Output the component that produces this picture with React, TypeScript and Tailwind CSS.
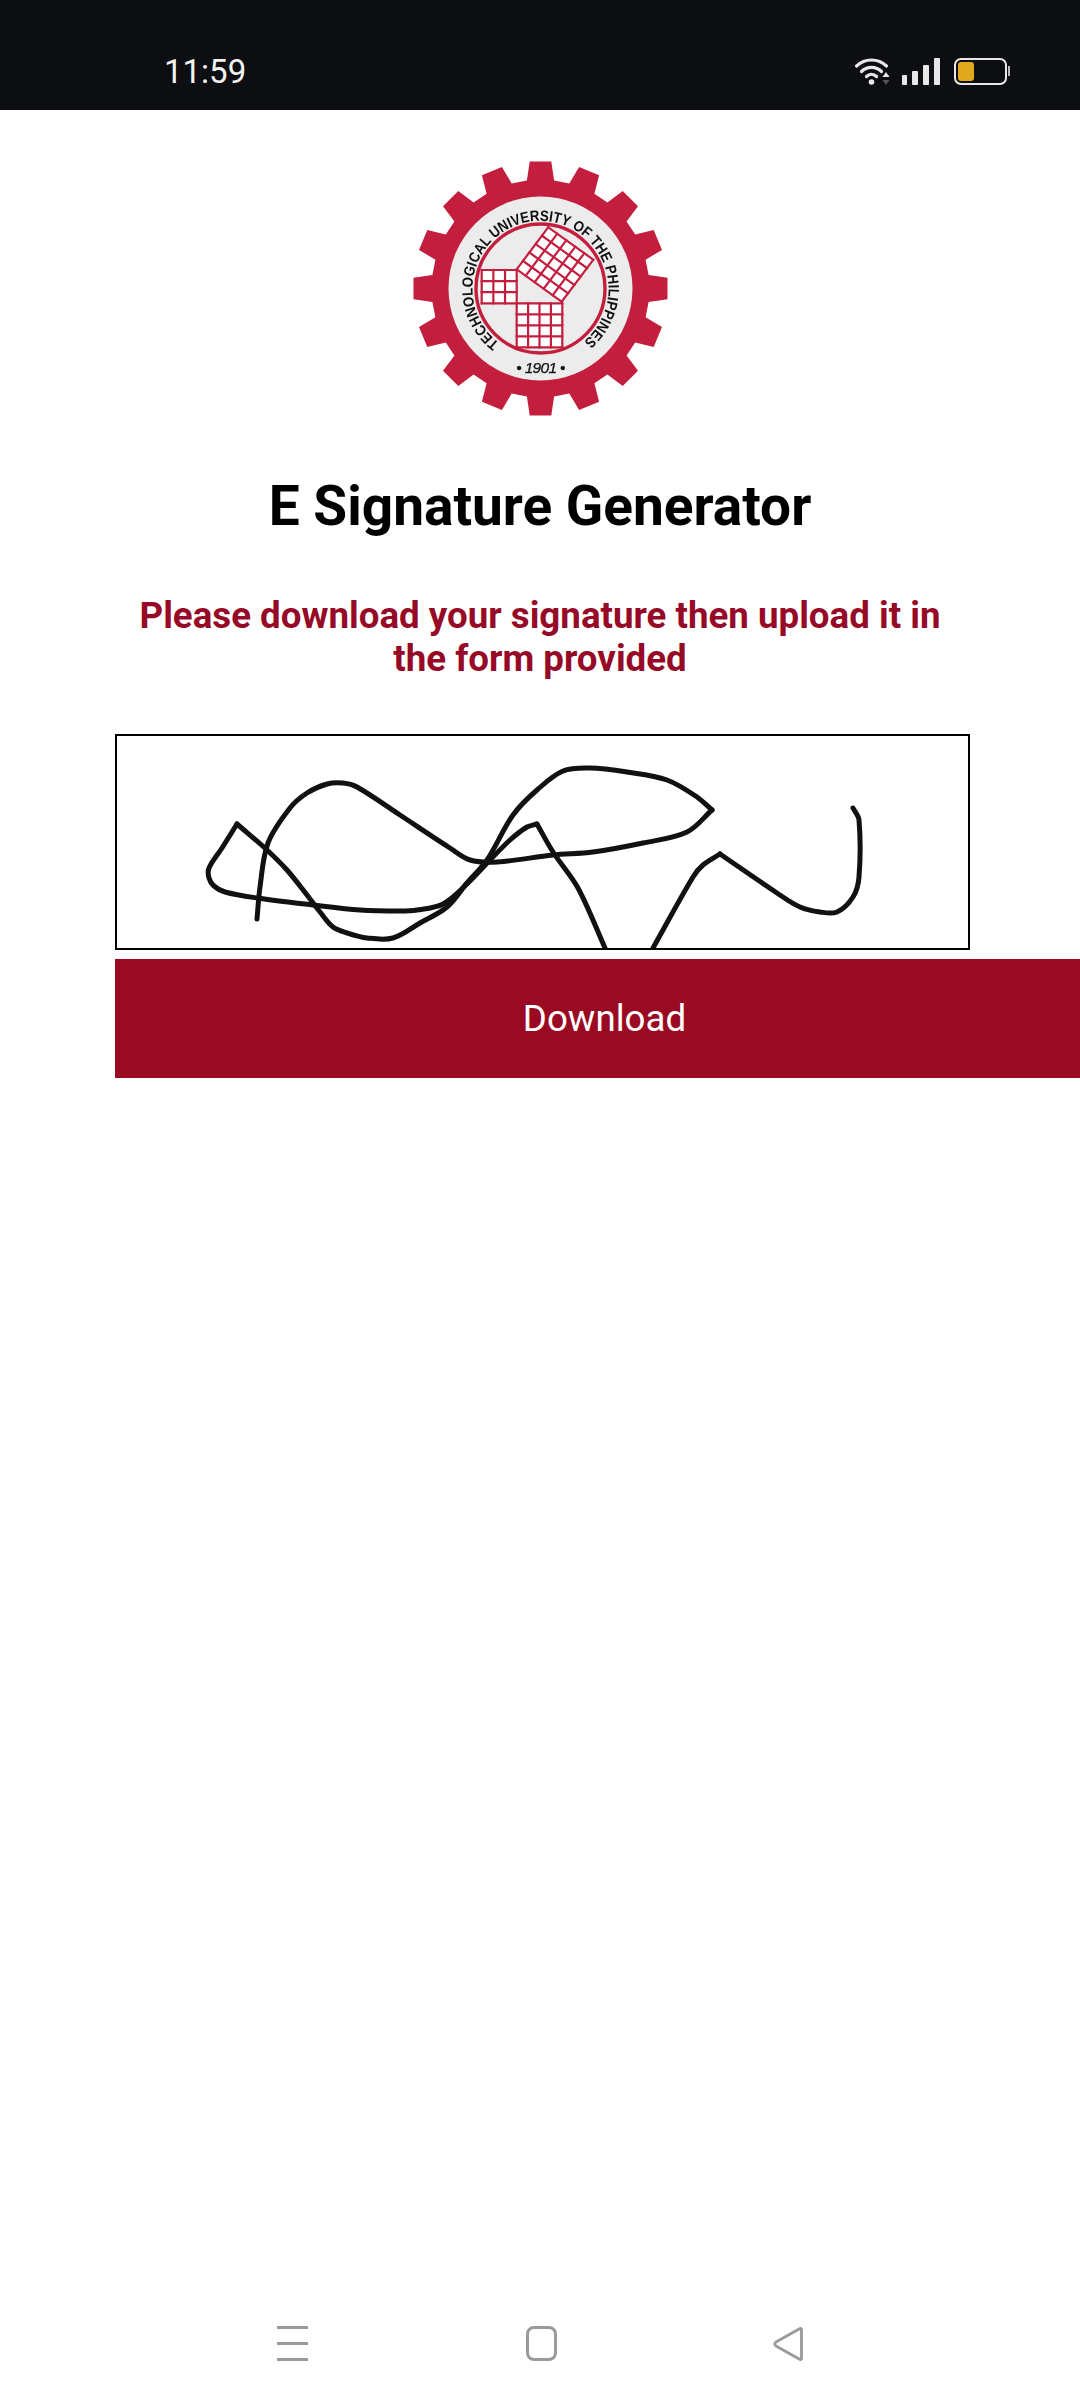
import React from "react";

const roboto = "font-['Roboto',sans-serif]";

// smooth line through the points, handles scaled to the segment length
const smooth = (pts: number[][]) => {
  const tangent = (a: number[], b: number[]) => {
    const dx = b[0] - a[0];
    const dy = b[1] - a[1];
    const l = Math.hypot(dx, dy) || 1;
    return [dx / l, dy / l];
  };
  let d = `M${pts[0][0]} ${pts[0][1]}`;
  for (let i = 0; i < pts.length - 1; i++) {
    const p0 = pts[i - 1] || pts[i];
    const p1 = pts[i];
    const p2 = pts[i + 1];
    const p3 = pts[i + 2] || p2;
    const len = Math.hypot(p2[0] - p1[0], p2[1] - p1[1]) / 3;
    const t1 = tangent(p0, p2);
    const t2 = tangent(p1, p3);
    d += ` C${(p1[0] + t1[0] * len).toFixed(1)} ${(p1[1] + t1[1] * len).toFixed(1)} ${(p2[0] - t2[0] * len).toFixed(1)} ${(p2[1] - t2[1] * len).toFixed(1)} ${p2[0]} ${p2[1]}`;
  }
  return d;
};

const strokes: number[][][] = [
  [[257, 919], [260, 887], [268, 843], [290, 808], [307, 793], [327, 784], [343, 783], [357, 787], [400, 815], [450, 848], [470, 860], [497, 862], [553, 855], [593, 852], [643, 843], [687, 832], [712, 810]],
  [[712, 810], [697, 797], [667, 780], [627, 772], [590, 768], [563, 771], [537, 790], [513, 815], [487, 860], [467, 883], [447, 907], [420, 923], [393, 938], [367, 938], [347, 933], [333, 927], [320, 912], [307, 895], [287, 870], [267, 850], [237, 824]],
  [[237, 824], [222, 848], [209, 868], [209, 878], [214, 886], [225, 892], [257, 898], [313, 905], [360, 910], [400, 911], [417, 910], [443, 904], [467, 884], [490, 860], [510, 840], [527, 827], [537, 824]],
  [[537, 824], [553, 852], [578, 888], [605, 948]],
  [[653, 948], [693, 877], [703, 865], [720, 854]],
  [[720, 854], [777, 893], [800, 907], [820, 912], [837, 912], [853, 897], [859, 877], [859, 820], [853, 808]],
];

const Signature = () => (
  <svg viewBox="117 736 851 212" className="block w-full h-full blur-[0.6px]">
    {strokes.map((s, i) => (
      <path key={i} d={smooth(s)} fill="none" stroke="#111" strokeWidth="5" strokeLinecap="round" strokeLinejoin="round" />
    ))}
  </svg>
);

const gearPath = () => {
  const c = 127.5;
  const pts: string[] = [];
  for (let i = 0; i < 16; i++) {
    const a = (i * Math.PI) / 8;
    const at = (r: number, off: number) => {
      const t = a + off;
      return `${(c + r * Math.sin(t)).toFixed(1)},${(c - r * Math.cos(t)).toFixed(1)}`;
    };
    pts.push(at(109, -0.125), at(127.5, -0.085), at(127.5, 0.085), at(109, 0.125));
  }
  return pts.join(" ");
};

const Grid = ({ o, u, v, n }: { o: number[]; u: number[]; v: number[]; n: number }) => {
  const lines = [];
  for (let i = 0; i <= n; i++) {
    const t = i / n;
    lines.push(
      <line key={"a" + i} x1={o[0] + u[0] * t} y1={o[1] + u[1] * t} x2={o[0] + u[0] * t + v[0]} y2={o[1] + u[1] * t + v[1]} />,
      <line key={"b" + i} x1={o[0] + v[0] * t} y1={o[1] + v[1] * t} x2={o[0] + v[0] * t + u[0]} y2={o[1] + v[1] * t + u[1]} />
    );
  }
  return (
    <g stroke="#c41e3f" strokeWidth="2.2" strokeLinecap="square">
      <polygon points={`${o[0]},${o[1]} ${o[0] + u[0]},${o[1] + u[1]} ${o[0] + u[0] + v[0]},${o[1] + u[1] + v[1]} ${o[0] + v[0]},${o[1] + v[1]}`} fill="#fff" stroke="none" />
      {lines}
    </g>
  );
};

const Logo = () => (
  <svg viewBox="0 0 255 255" className="block w-[255px] h-[255px] blur-[0.3px]">
    <polygon points={gearPath()} fill="#c41e3f" />
    <circle cx="127.5" cy="127.5" r="92" fill="#ececec" />
    <circle cx="127.5" cy="127.5" r="64.5" fill="#ececec" stroke="#c41e3f" strokeWidth="3.4" />
    <Grid o={[68.7, 109]} u={[35, 0]} v={[0, 33.3]} n={3} />
    <Grid o={[103.7, 142.3]} u={[45.6, 0]} v={[0, 44]} n={4} />
    <Grid o={[103.7, 108.3]} u={[45, 32.4]} v={[31.6, -42]} n={5} />
    <defs>
      <path id="ring" d="M86.6 182.1 A68 68 0 1 1 168.4 182.1" />
    </defs>
    <text fontFamily="Liberation Sans, sans-serif" fontSize="15" fontWeight="700" fill="#111">
      <textPath href="#ring" textLength="336" lengthAdjust="spacingAndGlyphs">TECHNOLOGICAL UNIVERSITY OF THE PHILIPPINES</textPath>
    </text>
    <text x="127.5" y="212" fontFamily="Liberation Sans, sans-serif" fontSize="15.5" fontStyle="italic" stroke="#111" strokeWidth="0.25" letterSpacing="-0.7" fill="#111" textAnchor="middle">• 1901 •</text>
  </svg>
);

const StatusBar = () => (
  <div className="h-[110px] bg-[#0c0e11] flex items-center justify-between pl-[164px] pr-[70px] pt-[34px] shrink-0">
    <span className={`${roboto} text-[33px] text-[#f2f2f2]`}>11:59</span>
    <div className="flex items-center gap-[12px] mt-[-2px]">
      <svg viewBox="0 0 36 30" className="w-[36px] h-[30px]">
        <g fill="none" stroke="#e8e8e8" strokeWidth="3.2" strokeLinecap="round">
          <path d="M2.5 10 C11 2 24 2 32.5 10" />
          <path d="M7.5 15.5 C13 10 22 10 27.5 15.5" />
          <path d="M12.5 20.5 C15.5 17.5 19.5 17.5 22.5 20.5" />
        </g>
        <circle cx="17.5" cy="26" r="2.8" fill="#e8e8e8" />
        <path d="M28.5 21 L32 16 L35.5 21 Z" fill="#e8e8e8" />
        <path d="M28.5 24 L32 29 L35.5 24 Z" fill="#555" />
      </svg>
      <div className="flex items-end gap-[5px] h-[28px]">
        <div className="w-[5px] h-[10px] bg-[#e8e8e8] rounded-[1px]" />
        <div className="w-[6px] h-[14px] bg-[#e8e8e8] rounded-[1px]" />
        <div className="w-[6px] h-[20px] bg-[#e8e8e8] rounded-[1px]" />
        <div className="w-[6px] h-[27px] bg-[#e8e8e8] rounded-[1px]" />
      </div>
      <div className="flex items-center ml-[2px]">
        <div className="w-[53px] h-[27px] border-2 border-[#e8e8e8] rounded-[7px] p-[2px]">
          <div className="w-[16px] h-full bg-[#e0a81c] rounded-[3px]" />
        </div>
        <div className="w-[2px] h-[10px] bg-[#bbb] ml-[1px]" />
      </div>
    </div>
  </div>
);

const NavBar = () => (
  <div className="mt-auto h-[120px] shrink-0 flex items-start pt-[46px] pl-[277px]">
    <div className="w-[31px] h-[35px] flex flex-col justify-between">
      <div className="h-[3px] bg-[#9a9a9a]" />
      <div className="h-[3px] bg-[#9a9a9a]" />
      <div className="h-[3px] bg-[#9a9a9a]" />
    </div>
    <div className="w-[31px] h-[35px] ml-[218px] border-[3px] border-[#9a9a9a] rounded-[8px]" />
    <svg viewBox="0 0 30 36" className="w-[30px] h-[36px] ml-[216px]">
      <path d="M27 2.5 Q28.5 2 28.5 4 V32 Q28.5 34 27 33.5 L3 20 Q0.5 18 3 16 Z" fill="none" stroke="#9a9a9a" strokeWidth="2.8" strokeLinejoin="round" />
    </svg>
  </div>
);

export default function App() {
  return (
    <div className={`${roboto} w-[1080px] h-[2400px] bg-white flex flex-col overflow-hidden`}>
      <StatusBar />
      <div className="flex justify-center mt-[51px]">
        <Logo />
      </div>
      <h1 className="text-[55px] leading-[60px] font-bold text-black text-center mt-[60px]">E Signature Generator</h1>
      <p className="text-[36.7px] leading-[43px] font-bold text-[#970a27] text-center mt-[58px] px-[130px]">
        Please download your signature then upload it in the form provided
      </p>
      <div className="ml-[115px] mt-[54px] w-[855px] h-[216px] border-2 border-black">
        <Signature />
      </div>
      <button className="ml-[115px] mt-[9px] w-[965px] h-[119px] bg-[#9b0a23] text-white text-[36.7px] pl-[14px] shrink-0">Download</button>
      <NavBar />
    </div>
  );
}
